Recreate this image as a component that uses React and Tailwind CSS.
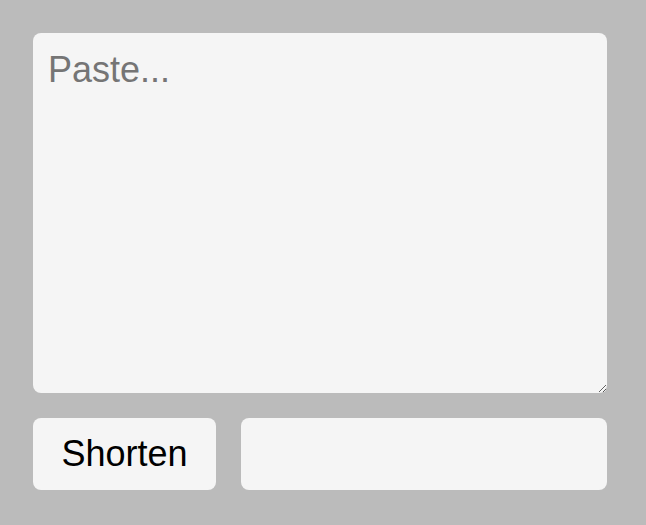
export default function App() {
  return (
    <div
      className="min-h-screen bg-[#bbbbbb] p-[33px]"
      style={{ fontFamily: '"Liberation Sans", Arial, sans-serif' }}
    >
      <div className="flex w-[574px] flex-col gap-[25px]">
        <textarea
          placeholder="Paste..."
          className="block h-[360px] w-full rounded-lg bg-[#f5f5f5] px-[15px] pt-[10px] pb-3 text-[36px] leading-normal text-black outline-none placeholder:text-[#757575]"
        />
        <div className="flex gap-[25px]">
          <button className="h-[72px] w-[183px] shrink-0 rounded-lg bg-[#f5f5f5] text-[36px] text-black">
            Shorten
          </button>
          <input
            type="text"
            className="h-[72px] min-w-0 flex-1 rounded-lg bg-[#f5f5f5] px-3 text-[36px] text-black outline-none"
          />
        </div>
      </div>
    </div>
  );
}
